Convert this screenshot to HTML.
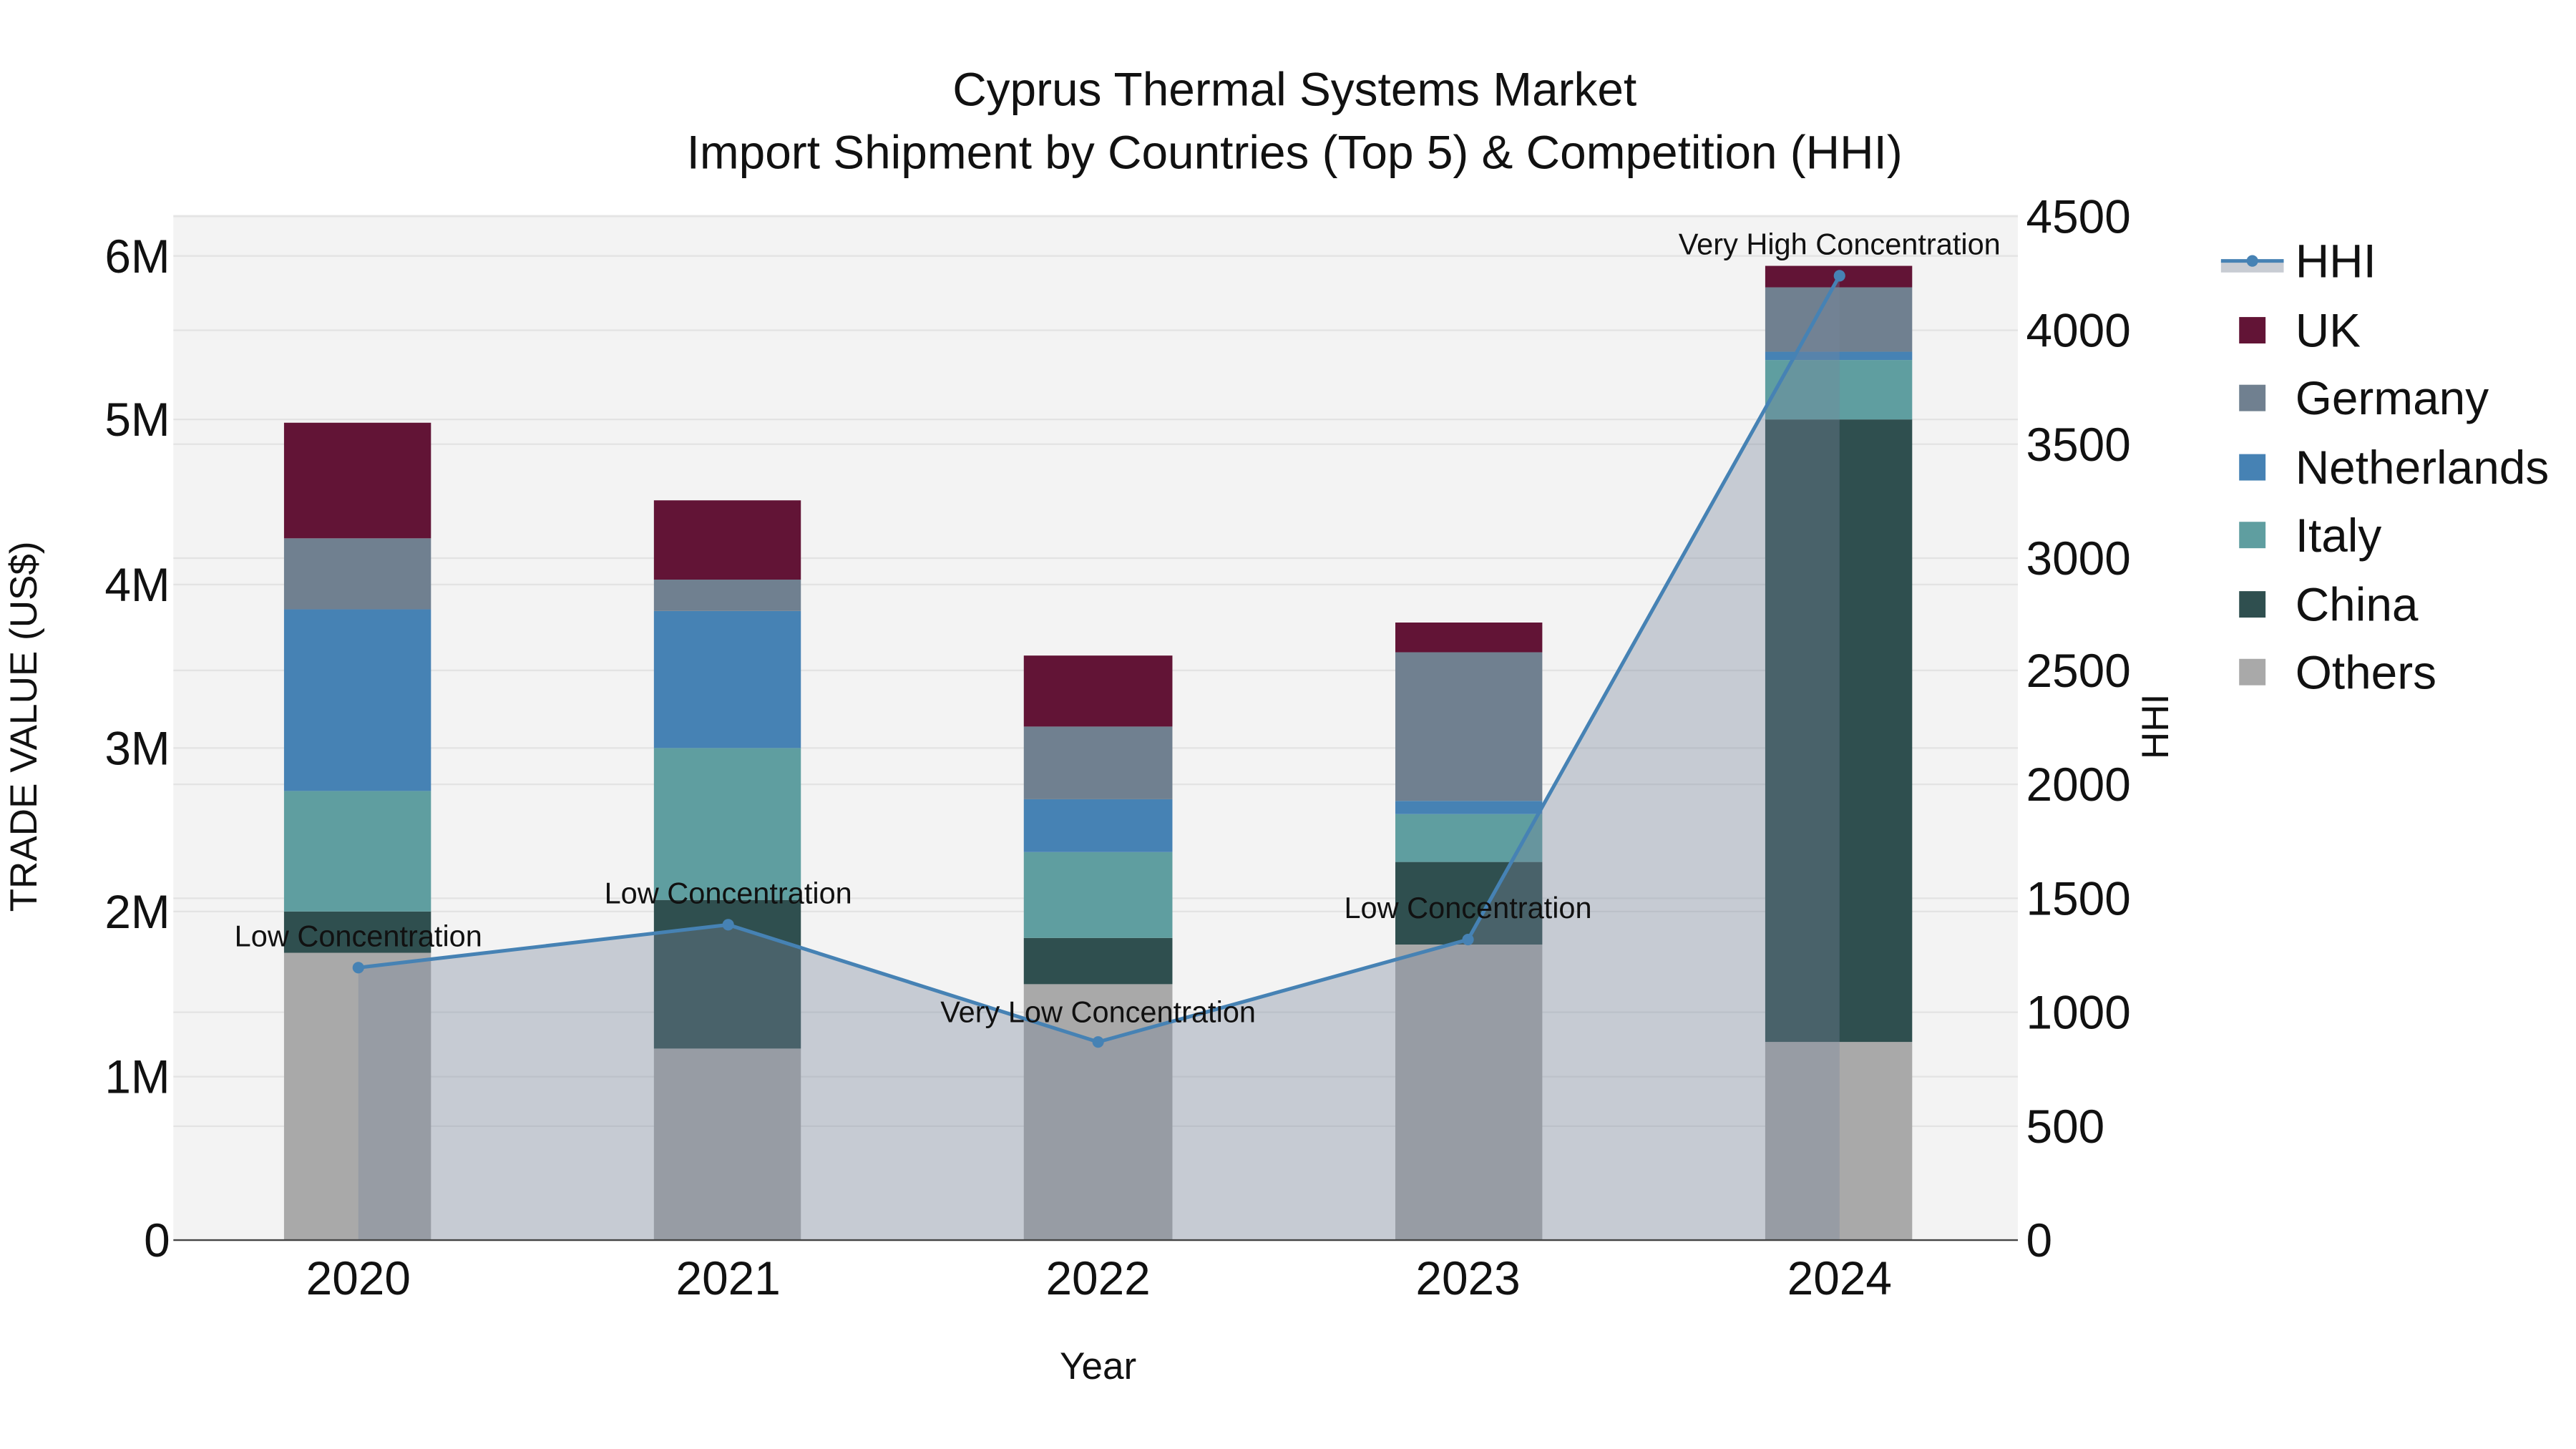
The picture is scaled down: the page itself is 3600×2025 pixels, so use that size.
<!DOCTYPE html>
<html><head><meta charset="utf-8"><style>html,body{margin:0;padding:0;background:#fff}svg{display:block}</style></head>
<body>
<svg width="3600" height="2025" viewBox="0 0 1560 877.5" xmlns="http://www.w3.org/2000/svg" font-family="Liberation Sans, sans-serif">
<rect width="1560" height="877.5" fill="#fff"/>
<rect x="105" y="130" width="1117" height="621" fill="#f3f3f3"/>
<g stroke="#e3e3e3" stroke-width="1">
<line x1="105" x2="1222" y1="652" y2="652"/><line x1="105" x2="1222" y1="552" y2="552"/><line x1="105" x2="1222" y1="453" y2="453"/><line x1="105" x2="1222" y1="354" y2="354"/><line x1="105" x2="1222" y1="254" y2="254"/><line x1="105" x2="1222" y1="155" y2="155"/>
<line x1="105" x2="1222" y1="682" y2="682"/><line x1="105" x2="1222" y1="613" y2="613"/><line x1="105" x2="1222" y1="544" y2="544"/><line x1="105" x2="1222" y1="475" y2="475"/><line x1="105" x2="1222" y1="406" y2="406"/><line x1="105" x2="1222" y1="338" y2="338"/><line x1="105" x2="1222" y1="269" y2="269"/><line x1="105" x2="1222" y1="200" y2="200"/><line x1="105" x2="1222" y1="131" y2="131"/>
</g>
<g>
<rect x="172" y="577" width="89" height="174" fill="#a9a9a9"/><rect x="172" y="552" width="89" height="25" fill="#2f4f4f"/><rect x="172" y="479" width="89" height="73" fill="#5f9ea0"/><rect x="172" y="369" width="89" height="110" fill="#4682b4"/><rect x="172" y="326" width="89" height="43" fill="#708090"/><rect x="172" y="256" width="89" height="70" fill="#621436"/>
<rect x="396" y="635" width="89" height="116" fill="#a9a9a9"/><rect x="396" y="545" width="89" height="90" fill="#2f4f4f"/><rect x="396" y="453" width="89" height="92" fill="#5f9ea0"/><rect x="396" y="370" width="89" height="83" fill="#4682b4"/><rect x="396" y="351" width="89" height="19" fill="#708090"/><rect x="396" y="303" width="89" height="48" fill="#621436"/>
<rect x="620" y="596" width="90" height="155" fill="#a9a9a9"/><rect x="620" y="568" width="90" height="28" fill="#2f4f4f"/><rect x="620" y="516" width="90" height="52" fill="#5f9ea0"/><rect x="620" y="484" width="90" height="32" fill="#4682b4"/><rect x="620" y="440" width="90" height="44" fill="#708090"/><rect x="620" y="397" width="90" height="43" fill="#621436"/>
<rect x="845" y="572" width="89" height="179" fill="#a9a9a9"/><rect x="845" y="522" width="89" height="50" fill="#2f4f4f"/><rect x="845" y="493" width="89" height="29" fill="#5f9ea0"/><rect x="845" y="485" width="89" height="8" fill="#4682b4"/><rect x="845" y="395" width="89" height="90" fill="#708090"/><rect x="845" y="377" width="89" height="18" fill="#621436"/>
<rect x="1069" y="631" width="89" height="120" fill="#a9a9a9"/><rect x="1069" y="254" width="89" height="377" fill="#2f4f4f"/><rect x="1069" y="218" width="89" height="36" fill="#5f9ea0"/><rect x="1069" y="213" width="89" height="5" fill="#4682b4"/><rect x="1069" y="174" width="89" height="39" fill="#708090"/><rect x="1069" y="161" width="89" height="13" fill="#621436"/>
</g>
<polygon points="217,751 217,586 441,560 665,631 889,569 1114,167 1114,751" fill="rgba(119,134,154,0.36)"/>
<line x1="105" x2="1222" y1="751" y2="751" stroke="#444" stroke-width="1"/>
<polyline points="217,586 441,560 665,631 889,569 1114,167" fill="none" stroke="#4682b4" stroke-width="2.2"/>
<g fill="#4682b4"><circle cx="217" cy="586" r="3.5"/><circle cx="441" cy="560" r="3.5"/><circle cx="665" cy="631" r="3.5"/><circle cx="889" cy="569" r="3.5"/><circle cx="1114" cy="167" r="3.5"/></g>
<g font-size="18" fill="#111" text-anchor="middle">
<text x="217" y="573">Low Concentration</text><text x="441" y="547">Low Concentration</text><text x="665" y="619">Very Low Concentration</text><text x="889" y="556">Low Concentration</text><text x="1114" y="154">Very High Concentration</text>
</g>
<g font-size="28.5" fill="#111" text-anchor="end">
<text x="103" y="761">0</text><text x="103" y="662">1M</text><text x="103" y="562">2M</text><text x="103" y="463">3M</text><text x="103" y="364">4M</text><text x="103" y="264">5M</text><text x="103" y="165">6M</text>
</g>
<g font-size="28.5" fill="#111" text-anchor="start">
<text x="1227" y="761">0</text><text x="1227" y="692">500</text><text x="1227" y="623">1000</text><text x="1227" y="554">1500</text><text x="1227" y="485">2000</text><text x="1227" y="416">2500</text><text x="1227" y="348">3000</text><text x="1227" y="279">3500</text><text x="1227" y="210">4000</text><text x="1227" y="141">4500</text>
</g>
<g font-size="28.5" fill="#111" text-anchor="middle">
<text x="217" y="784">2020</text><text x="441" y="784">2021</text><text x="665" y="784">2022</text><text x="889" y="784">2023</text><text x="1114" y="784">2024</text>
</g>
<text x="665" y="835" font-size="23" text-anchor="middle" fill="#111">Year</text>
<text transform="translate(22,440) rotate(-90)" font-size="23" text-anchor="middle" fill="#111">TRADE VALUE (US$)</text>
<text transform="translate(1313,440) rotate(-90)" font-size="23" text-anchor="middle" fill="#111">HHI</text>
<text x="784" y="64" font-size="28.5" text-anchor="middle" fill="#111">Cyprus Thermal Systems Market</text>
<text x="784" y="102" font-size="28.5" text-anchor="middle" fill="#111">Import Shipment by Countries (Top 5) &amp; Competition (HHI)</text>
<g>
<rect x="1345" y="158" width="38" height="7" fill="#c8ccd3"/>
<line x1="1345" x2="1383" y1="158" y2="158" stroke="#4682b4" stroke-width="2.2"/><circle cx="1364" cy="158" r="3.5" fill="#4682b4"/>
<rect x="1356" y="192" width="16" height="16" fill="#621436"/><rect x="1356" y="233" width="16" height="16" fill="#708090"/><rect x="1356" y="275" width="16" height="16" fill="#4682b4"/><rect x="1356" y="316" width="16" height="16" fill="#5f9ea0"/><rect x="1356" y="358" width="16" height="16" fill="#2f4f4f"/><rect x="1356" y="399" width="16" height="16" fill="#a9a9a9"/>
</g>
<g font-size="28.5" fill="#111">
<text x="1390" y="168">HHI</text><text x="1390" y="210">UK</text><text x="1390" y="251">Germany</text><text x="1390" y="293">Netherlands</text><text x="1390" y="334">Italy</text><text x="1390" y="376">China</text><text x="1390" y="417">Others</text>
</g>
</svg>
</body></html>
